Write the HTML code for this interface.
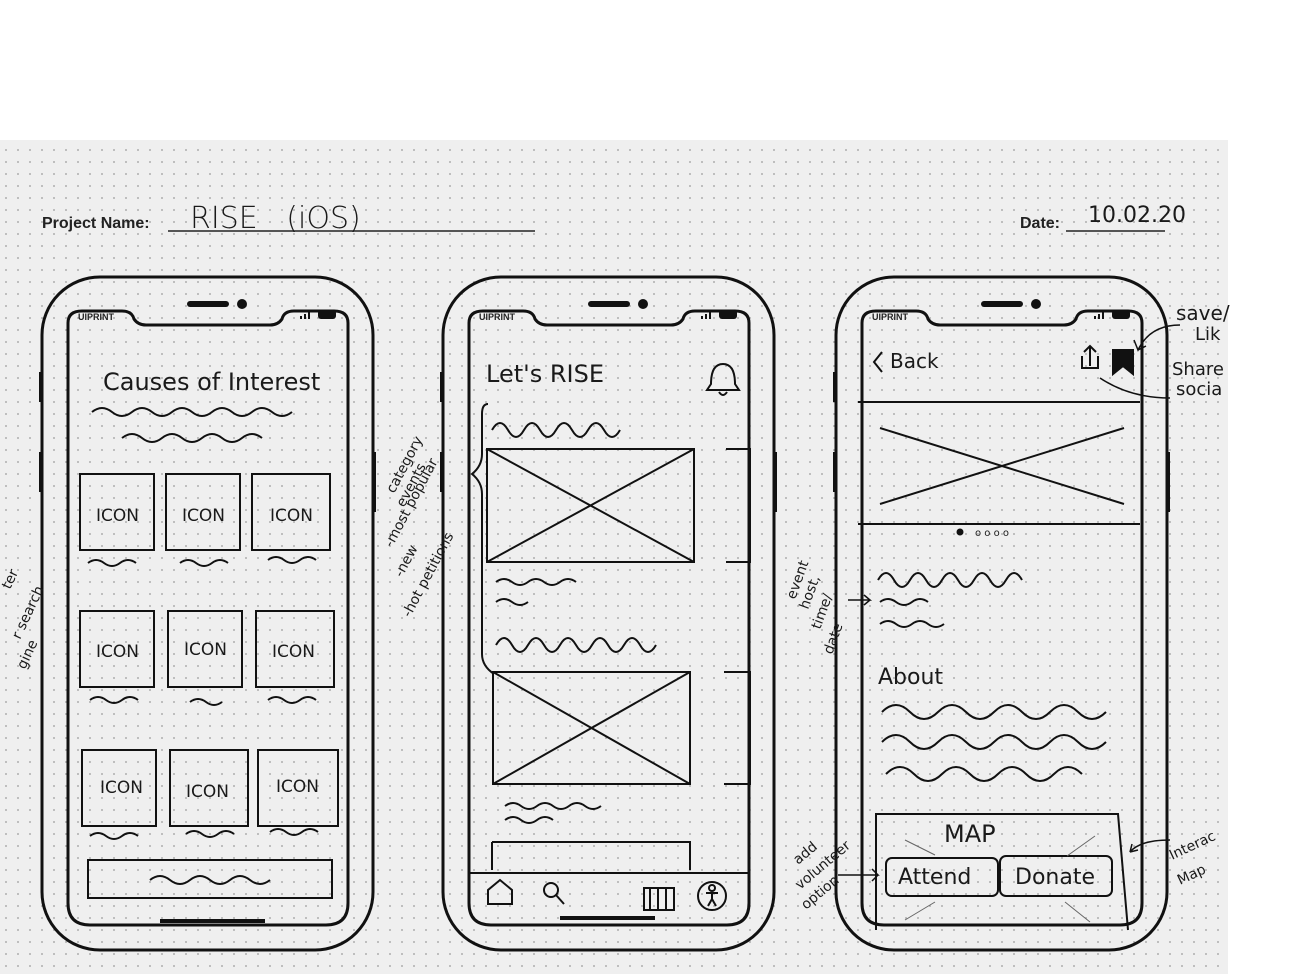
<!DOCTYPE html>
<html><head><meta charset="utf-8"><style>
html,body{margin:0;padding:0;background:#fff;width:1293px;height:974px;overflow:hidden}
svg{display:block}
.h{font-family:"Liberation Sans",sans-serif;fill:#222}
.hw{font-family:"DejaVu Sans","Liberation Sans",sans-serif;fill:#1a1a1a}
</style></head><body>
<svg width="1293" height="974" viewBox="0 0 1293 974" xmlns="http://www.w3.org/2000/svg">
<defs>
<pattern id="dots" width="12" height="12" patternUnits="userSpaceOnUse"><circle cx="6" cy="6" r="0.9" fill="#9a9a9a"/></pattern>
<g id="phone">
<rect x="0" y="0" width="331" height="673" rx="58" fill="none" stroke="#111" stroke-width="3"/>
<path d="M26 46 Q26 34 40 34 L80 34 Q90 34 92 42 Q96 48 104 48 L228 48 Q236 48 240 42 Q242 34 252 34 L292 34 Q306 34 306 46 L306 626 Q306 648 284 648 L48 648 Q26 648 26 626 Z" fill="none" stroke="#111" stroke-width="3"/>
<rect x="145" y="24" width="42" height="6" rx="3" fill="#111"/><circle cx="200" cy="27" r="5" fill="#111"/>
<text x="36" y="43" class="h" font-size="9" font-weight="bold">UIPRINT</text>
<rect x="276" y="33" width="18" height="9" rx="3" fill="#111"/><path d="M258 42h2v-3h-2zM262 42h2v-5h-2zM266 42h2v-7h-2z" fill="#111"/>
<rect x="-3" y="95" width="4" height="30" fill="#111"/><rect x="330" y="175" width="4" height="60" fill="#111"/>
<rect x="-3" y="175" width="4" height="40" fill="#111"/>
</g>
</defs>
<rect x="0" y="140" width="1228" height="834" fill="#efefef"/>
<rect x="0" y="140" width="1228" height="834" fill="url(#dots)"/>
<text x="42" y="228" class="h" font-size="16" font-weight="bold">Project Name:</text>
<line x1="168" y1="231" x2="535" y2="231" stroke="#222" stroke-width="1.5"/>
<text x="190" y="228" class="hw" font-size="30" font-weight="300">RISE&#160;&#160;&#160;(iOS)</text>
<text x="1020" y="228" class="h" font-size="16" font-weight="bold">Date:</text>
<line x1="1066" y1="231" x2="1165" y2="231" stroke="#222" stroke-width="1.5"/>
<text x="1088" y="222" class="hw" font-size="22">10.02.20</text>
<use href="#phone" x="42" y="277"/>
<use href="#phone" x="443" y="277"/>
<use href="#phone" x="836" y="277"/>
<g fill="none" stroke="#111" stroke-width="2">
<path d="M92 412 q10-8 20 0 t20 0 t20 0 t20 0 t20 0 t20 0 t20 0 t20 0 t20 0 t20 0 M122 438 q10-8 20 0 t20 0 t20 0 t20 0 t20 0 t20 0 t20 0"/>
<rect x="80" y="474" width="74" height="76"/><rect x="166" y="474" width="74" height="76"/><rect x="252" y="474" width="78" height="76"/>
<rect x="80" y="611" width="74" height="76"/><rect x="168" y="611" width="74" height="76"/><rect x="256" y="611" width="78" height="76"/>
<rect x="82" y="750" width="74" height="76"/><rect x="170" y="750" width="78" height="76"/><rect x="258" y="750" width="80" height="76"/>
<path d="M88 563 q8-6 16 0 t16 0 t16 0 M180 563 q8-6 16 0 t16 0 t16 0 M268 560 q8-6 16 0 t16 0 t16 0 M90 700 q8-6 16 0 t16 0 t16 0 M190 702 q8-6 16 0 t16 0 M268 700 q8-6 16 0 t16 0 t16 0 M90 836 q8-6 16 0 t16 0 t16 0 M186 834 q8-6 16 0 t16 0 t16 0 M270 832 q8-6 16 0 t16 0 t16 0"/>
<rect x="88" y="860" width="244" height="38"/><path d="M150 880 q10-8 20 0 t20 0 t20 0 t20 0 t20 0 t20 0"/>
<line x1="160" y1="921" x2="265" y2="921" stroke-width="4"/>
<path d="M492 430 q8-14 16 0 t16 0 t16 0 t16 0 t16 0 t16 0 t16 0 t16 0"/>
<rect x="487" y="449" width="207" height="113"/><path d="M487 449l207 113M694 449l-207 113"/>
<path d="M726 449h24v113h-24"/>
<path d="M496 582 q8-6 16 0 t16 0 t16 0 t16 0 t16 0 M496 602 q8-6 16 0 t16 0"/>
<path d="M496 645 q8-14 16 0 t16 0 t16 0 t16 0 t16 0 t16 0 t16 0 t16 0 t16 0 t16 0"/>
<rect x="493" y="672" width="197" height="112"/><path d="M493 672l197 112M690 672l-197 112"/>
<path d="M724 672h26v112h-26"/>
<path d="M505 806 q8-6 16 0 t16 0 t16 0 t16 0 t16 0 t16 0 M505 820 q8-6 16 0 t16 0 t16 0"/>
<path d="M492 842h198v28"/><path d="M492 842v28"/>
<path d="M469 873 H749"/>
<path d="M488 904v-14l12-10 12 10v14z"/><circle cx="551" cy="890" r="7"/><path d="M556 895l8 9"/>
<rect x="644" y="888" width="30" height="22"/><path d="M650 888v22M658 888v22M666 888v22"/>
<circle cx="712" cy="896" r="14"/><circle cx="712" cy="888" r="3"/><path d="M706 893h12M712 893v6l-4 7M712 899l4 7"/>
<line x1="560" y1="918" x2="655" y2="918" stroke-width="4"/>
<path d="M711 384q0-20 12-20t12 20l4 6h-32z M719 392q4 6 8 0"/>
<path d="M488 404 q-6 0-6 10 v40 q0 12-10 20 q10 8 10 20 v160 q0 12 12 20"/>
<path d="M882 352l-8 10 8 10"/>
<path d="M1082 356v12h16v-12M1090 366v-20M1084 352l6-6 6 6"/>
<path d="M1113 350h20v24l-10-8-10 8z" fill="#111"/>
<path d="M858 402H1140M858 524H1140"/>
<path d="M880 428l244 76M1124 428l-244 76"/>
<path d="M878 580 q8-14 16 0 t16 0 t16 0 t16 0 t16 0 t16 0 t16 0 t16 0 t16 0"/>
<path d="M880 602 q8-6 16 0 t16 0 t16 0 M880 624 q8-6 16 0 t16 0 t16 0 t16 0"/>
<path d="M882 712 q14-14 28 0 t28 0 t28 0 t28 0 t28 0 t28 0 t28 0 t28 0 M882 742 q14-14 28 0 t28 0 t28 0 t28 0 t28 0 t28 0 t28 0 t28 0 M886 774 q14-14 28 0 t28 0 t28 0 t28 0 t28 0 t28 0 t28 0"/>
<path d="M876 930V814H1118l10 116"/>
<rect x="886" y="858" width="112" height="38" rx="6"/><rect x="1000" y="856" width="112" height="40" rx="6"/>
<path d="M905 840l30 15M1095 836l-28 20M905 920l30-18M1090 922l-25-20" stroke-width="1" stroke="#666"/>
<path d="M848 600h22l-6-5M870 600l-6 5" stroke-width="1.5"/>
<path d="M838 875h40l-6-6M878 875l-6 6" stroke-width="1.5"/>
<path d="M1180 325q-30 0-42 25l-4-10M1138 350l8-4" stroke-width="1.5"/>
<path d="M1170 398q-40 0-70-20" stroke-width="1.5"/>
<path d="M1170 840q-30 0-40 12l2-8M1130 852l8-2" stroke-width="1.5"/>
</g>
<circle cx="960" cy="532" r="3.5" fill="#111"/>
<text x="975" y="536" class="hw" font-size="10">o o o o</text>
<g class="hw" font-size="17">
<text x="103" y="390" font-size="24">Causes of Interest</text>
<text x="96" y="521">ICON</text><text x="182" y="521">ICON</text><text x="270" y="521">ICON</text>
<text x="96" y="657">ICON</text><text x="184" y="655">ICON</text><text x="272" y="657">ICON</text>
<text x="100" y="793">ICON</text><text x="186" y="797">ICON</text><text x="276" y="792">ICON</text>
<text x="486" y="382" font-size="24">Let's RISE</text>
<text x="890" y="368" font-size="20">Back</text>
<text x="878" y="684" font-size="22">About</text>
<text x="944" y="842" font-size="24">MAP</text>
<text x="898" y="884" font-size="22">Attend</text>
<text x="1015" y="884" font-size="22">Donate</text>
<text x="1176" y="320" font-size="20">save/</text><text x="1195" y="340" font-size="18">Lik</text>
<text x="1172" y="375" font-size="18">Share</text><text x="1176" y="395" font-size="18">socia</text>
</g>
<g class="hw" font-size="14">
<text transform="translate(394,494) rotate(-62)">category</text>
<text transform="translate(404,508) rotate(-62)">events</text>
<text transform="translate(392,548) rotate(-62)">-most popular</text>
<text transform="translate(402,578) rotate(-62)">-new</text>
<text transform="translate(410,618) rotate(-62)">-hot petitions</text>
<text transform="translate(795,600) rotate(-70)">event</text>
<text transform="translate(808,610) rotate(-70)">host,</text>
<text transform="translate(820,630) rotate(-70)">time/</text>
<text transform="translate(832,655) rotate(-70)">date</text>
<text transform="translate(798,865) rotate(-40)">add</text>
<text transform="translate(800,890) rotate(-40)">volunteer</text>
<text transform="translate(806,910) rotate(-40)">option</text>
<text transform="translate(1172,860) rotate(-25)">Interac</text>
<text transform="translate(1180,885) rotate(-25)">Map</text>
<text transform="translate(10,590) rotate(-65)">ter</text>
<text transform="translate(20,640) rotate(-65)">r search</text>
<text transform="translate(25,670) rotate(-65)">gine</text>
</g>
</svg>
</body></html>
